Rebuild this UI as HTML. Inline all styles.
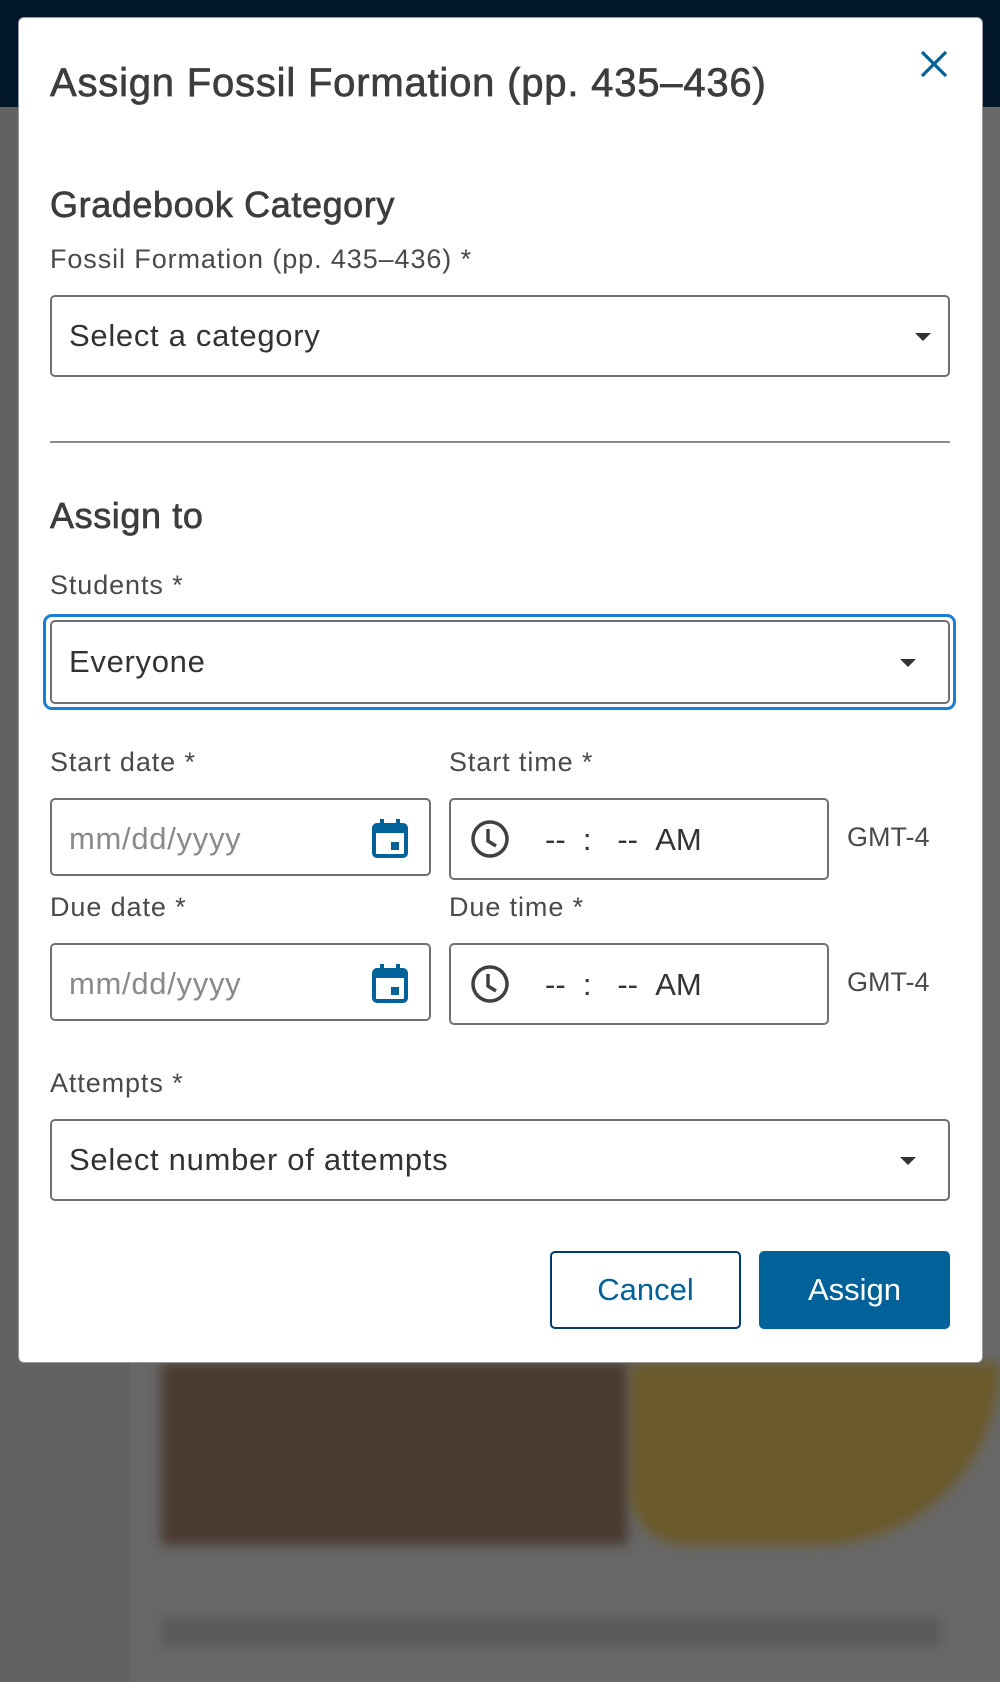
<!DOCTYPE html>
<html><head><meta charset="utf-8"><style>
*{box-sizing:border-box;margin:0;padding:0}
body{width:1000px;height:1682px;position:relative;overflow:hidden;background:#686868;font-family:"Liberation Sans",sans-serif;color:#404040}
.a{position:absolute}
.lbl{position:absolute;font-size:27px;letter-spacing:0.9px;color:#4a4a4a;line-height:30px}
.box{position:absolute;border:2px solid #707070;border-radius:5px;background:#fff}
.tri{position:absolute;width:0;height:0;border-left:8px solid transparent;border-right:8px solid transparent;border-top:8px solid #333}
.sel{position:absolute;font-size:31px;letter-spacing:0.7px;color:#333;line-height:34px}
.h{position:absolute;font-size:36px;letter-spacing:0.6px;line-height:40px;color:#3d3d3d;-webkit-text-stroke:0.7px #3d3d3d}
</style></head><body>
<div class="a" style="left:0;top:0;width:1000px;height:107px;background:#03172a"></div>
<div class="a" style="left:0;top:107px;width:130px;height:1575px;background:#626262"></div>
<div class="a" style="left:161px;top:1363px;width:467px;height:182px;background:#4a3a30;filter:blur(6px)"></div>
<div class="a" style="left:630px;top:1363px;width:370px;height:182px;background:#6b5a2a;border-radius:0 0 200px 60px;filter:blur(6px)"></div>
<div class="a" style="left:161px;top:1618px;width:780px;height:28px;background:#5a5a5a;filter:blur(5px)"></div>

<div class="a" style="left:18px;top:17px;width:965px;height:1346px;background:#fff;border-radius:6px;border:1px solid #999"></div>
<div class="h" style="left:50px;top:58px;font-size:40px;line-height:50px;letter-spacing:0.8px">Assign Fossil Formation (pp. 435–436)</div>
<svg class="a" style="left:920px;top:50px" width="28" height="28" viewBox="0 0 28 28"><path d="M2 2L26 26M26 2L2 26" stroke="#006298" stroke-width="3.2"/></svg>

<div class="h" style="left:50px;top:185px">Gradebook Category</div>
<div class="lbl" style="left:50px;top:244px">Fossil Formation (pp. 435–436) *</div>
<div class="box" style="left:50px;top:295px;width:900px;height:82px"></div>
<div class="sel" style="left:69px;top:319px">Select a category</div>
<div class="tri" style="left:915px;top:333px"></div>
<div class="a" style="left:50px;top:441px;width:900px;height:2px;background:#8a8a8a"></div>

<div class="h" style="left:50px;top:496px">Assign to</div>
<div class="lbl" style="left:50px;top:570px">Students *</div>
<div class="a" style="left:43px;top:614px;width:913px;height:96px;border:3px solid #1a7fd4;border-radius:9px"></div>
<div class="box" style="left:50px;top:620px;width:900px;height:84px"></div>
<div class="sel" style="left:69px;top:645px">Everyone</div>
<div class="tri" style="left:900px;top:659px"></div>

<div class="lbl" style="left:50px;top:747px">Start date *</div>
<div class="lbl" style="left:449px;top:747px">Start time *</div>
<div class="box" style="left:50px;top:798px;width:381px;height:78px"></div>
<div class="sel" style="left:69px;top:822px;color:#8a8a8a">mm/dd/yyyy</div>
<svg class="a" style="left:371px;top:818px" width="38" height="40" viewBox="0 0 38 40"><rect x="3" y="7" width="32" height="31" rx="3" fill="none" stroke="#006298" stroke-width="4"/><rect x="3" y="7" width="32" height="8" fill="#006298"/><rect x="9" y="1" width="4" height="8" fill="#006298"/><rect x="25" y="1" width="4" height="8" fill="#006298"/><rect x="20" y="24" width="8" height="8" fill="#006298"/></svg>
<div class="box" style="left:449px;top:798px;width:380px;height:82px"></div>
<svg class="a" style="left:470px;top:819px" width="40" height="40" viewBox="0 0 40 40"><circle cx="20" cy="20" r="17" fill="none" stroke="#404040" stroke-width="3.5"/><path d="M18 10V22L26 27" fill="none" stroke="#404040" stroke-width="3.5"/></svg>
<div class="sel" style="left:545px;top:823px;letter-spacing:0">-- &nbsp;: &nbsp; -- &nbsp;AM</div>
<div class="a" style="left:847px;top:822px;font-size:27px;color:#4a4a4a">GMT-4</div>

<div class="lbl" style="left:50px;top:892px">Due date *</div>
<div class="lbl" style="left:449px;top:892px">Due time *</div>
<div class="box" style="left:50px;top:943px;width:381px;height:78px"></div>
<div class="sel" style="left:69px;top:967px;color:#8a8a8a">mm/dd/yyyy</div>
<svg class="a" style="left:371px;top:963px" width="38" height="40" viewBox="0 0 38 40"><rect x="3" y="7" width="32" height="31" rx="3" fill="none" stroke="#006298" stroke-width="4"/><rect x="3" y="7" width="32" height="8" fill="#006298"/><rect x="9" y="1" width="4" height="8" fill="#006298"/><rect x="25" y="1" width="4" height="8" fill="#006298"/><rect x="20" y="24" width="8" height="8" fill="#006298"/></svg>
<div class="box" style="left:449px;top:943px;width:380px;height:82px"></div>
<svg class="a" style="left:470px;top:964px" width="40" height="40" viewBox="0 0 40 40"><circle cx="20" cy="20" r="17" fill="none" stroke="#404040" stroke-width="3.5"/><path d="M18 10V22L26 27" fill="none" stroke="#404040" stroke-width="3.5"/></svg>
<div class="sel" style="left:545px;top:968px;letter-spacing:0">-- &nbsp;: &nbsp; -- &nbsp;AM</div>
<div class="a" style="left:847px;top:967px;font-size:27px;color:#4a4a4a">GMT-4</div>

<div class="lbl" style="left:50px;top:1068px">Attempts *</div>
<div class="box" style="left:50px;top:1119px;width:900px;height:82px"></div>
<div class="sel" style="left:69px;top:1143px">Select number of attempts</div>
<div class="tri" style="left:900px;top:1157px"></div>

<div class="a" style="left:550px;top:1251px;width:191px;height:78px;border:2px solid #003a6c;border-radius:5px;color:#006298;font-size:31px;line-height:74px;text-align:center">Cancel</div>
<div class="a" style="left:759px;top:1251px;width:191px;height:78px;background:#006298;border-radius:5px;color:#fff;font-size:31px;line-height:78px;text-align:center">Assign</div>
</body></html>
